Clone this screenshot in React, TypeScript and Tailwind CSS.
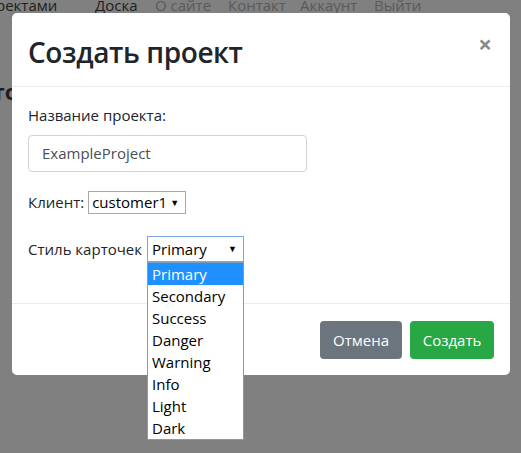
import React from 'react';

const styles = ['Primary', 'Secondary', 'Success', 'Danger', 'Warning', 'Info', 'Light', 'Dark'];

const App = () => {
    return (
        <div className="relative w-[521px] h-[453px] overflow-hidden bg-[#808080] font-['Open_Sans',sans-serif] text-[15px]">
            {/* page behind the backdrop */}
            <div className="flex pl-[0px] -mt-[7px] text-[15px] leading-[24px] whitespace-nowrap">
                <span className="-ml-[4px] w-[99px] text-[#1d1d1d]">ректами</span>
                <span className="w-[60px] text-[#1d1d1d]">Доска</span>
                <span className="w-[73px] text-[#5a5a5a]">О сайте</span>
                <span className="w-[72px] text-[#5a5a5a]">Контакт</span>
                <span className="w-[74px] text-[#5a5a5a]">Аккаунт</span>
                <span className="text-[#5a5a5a]">Выйти</span>
            </div>
            <div className="mt-[58px] -ml-[78px] text-[22px] font-bold text-[#1d1d1d]">Проектов</div>

            {/* modal */}
            <div className="absolute left-[12px] top-[13px] w-[498px] h-[362px] bg-white rounded-[5px] flex flex-col">
                <div className="h-[74px] flex items-start justify-between px-[16px] border-b border-[#e9ecef]">
                    <h2 className="mt-[22px] text-[28px] leading-[34px] font-semibold tracking-[-0.4px] text-[#212529]">Создать проект</h2>
                    <span className="mt-[17px] mr-[2px] text-[24px] leading-[28px] font-bold text-[#8a8a8a]">×</span>
                </div>

                <div className="h-[216px] px-[16px] text-[#212529]">
                    <div className="mt-[16px] leading-[24px]">Название проекта:</div>
                    <div className="mt-[8px] w-[279px] h-[37px] border border-[#ced4da] rounded-[4px] flex items-center px-[13px] text-[#495057]">ExampleProject</div>
                    <div className="mt-[19px] flex items-center h-[23px]">
                        <span>Клиент:</span>
                        <div className="ml-[4px] w-[98px] h-[23px] border border-[#a9a9a9] flex items-center justify-between pl-[3px] pr-[6px] text-black">
                            <span>customer1</span>
                            <span className="text-[9px]">▼</span>
                        </div>
                    </div>
                    <div className="mt-[22px] flex items-center h-[26px]">
                        <span>Стиль карточек</span>
                        <div className="relative ml-[5px]">
                            <div className="w-[97px] h-[26px] border border-[#7ea6e0] flex items-center justify-between pl-[4px] pr-[6px] text-black">
                                <span>Primary</span>
                                <span className="text-[9px]">▼</span>
                            </div>
                            <ul className="absolute left-0 top-[26px] w-[97px] bg-white border border-[#7f9db9] z-10">
                                {styles.map((s, i) => (
                                    <li key={s} className={`h-[22px] leading-[22px] pl-[4px] ${i === 0 ? 'bg-[#1e90ff] text-white' : 'text-black'}`}>{s}</li>
                                ))}
                            </ul>
                        </div>
                    </div>
                </div>

                <div className="flex-1 border-t border-[#e9ecef] flex items-start justify-end gap-[8px] pt-[17px] pr-[16px]">
                    <button className="w-[82px] h-[38px] rounded-[4px] bg-[#6c757d] text-white">Отмена</button>
                    <button className="w-[84px] h-[38px] rounded-[4px] bg-[#28a745] text-white">Создать</button>
                </div>
            </div>
        </div>
    );
};

export default App;
